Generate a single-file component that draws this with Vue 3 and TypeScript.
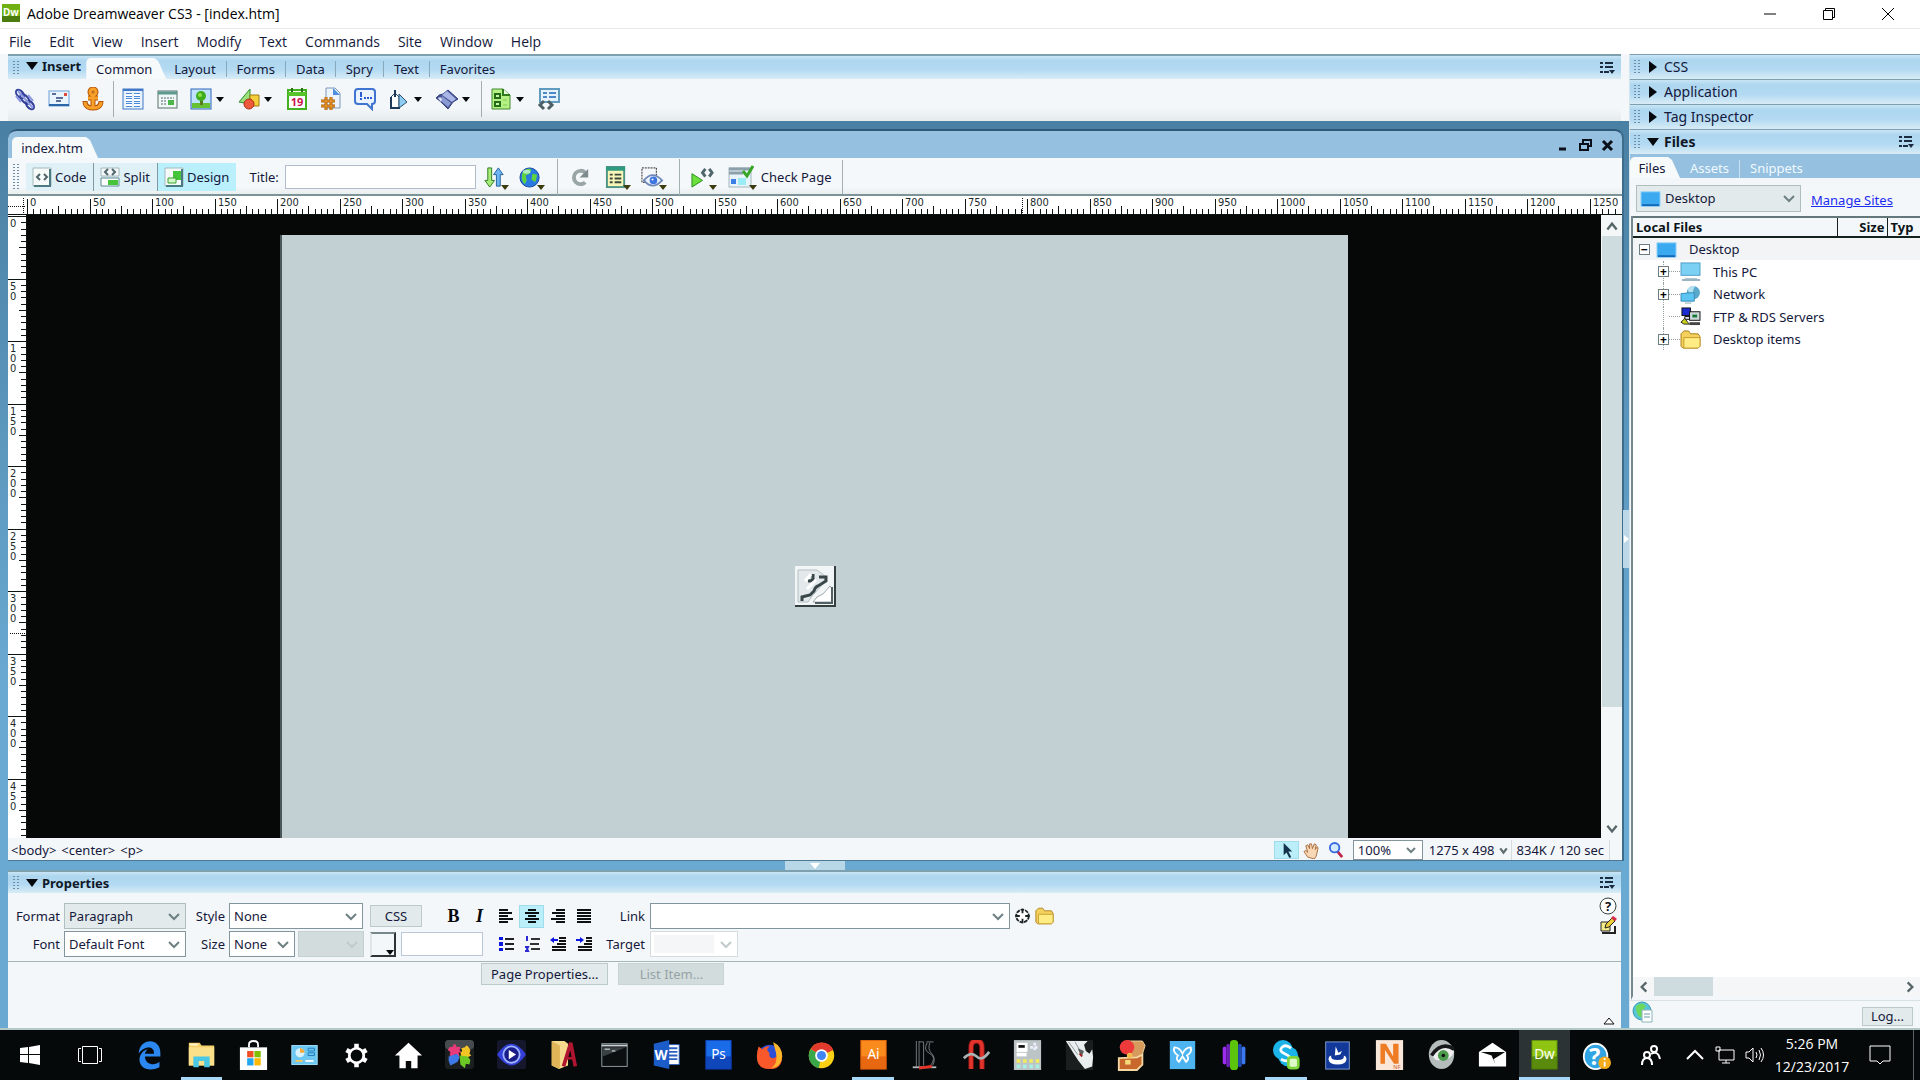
<script setup lang="ts">
import { computed, onBeforeUnmount, onMounted, ref } from 'vue'

interface Tool { name: string; icon: string; menu?: boolean; divider?: boolean }
interface TaskApp { name: string; icon: string; state?: 'open' | 'active' }

const menus = ['File', 'Edit', 'View', 'Insert', 'Modify', 'Text', 'Commands', 'Site', 'Window', 'Help']
const insertTabs = ['Layout', 'Forms', 'Data', 'Spry', 'Text', 'Favorites']
const panels = ['CSS', 'Application', 'Tag Inspector']

const insertTools: Tool[] = [
  { name: 'Hyperlink', icon: '<g fill="none" stroke="#33409a" stroke-width="2"><ellipse cx="7" cy="7" rx="3" ry="5" transform="rotate(-42 7 7)"/><ellipse cx="12" cy="12" rx="3" ry="6" transform="rotate(-42 12 12)"/><ellipse cx="17" cy="18" rx="3" ry="5" transform="rotate(-42 17 18)"/></g><path d="M5 4l15 17M8 15l-5-6M20 14l-5-6" stroke="#8f9be0" stroke-width="2"/>' },
  { name: 'Email Link', icon: '<rect x="2" y="4" width="20" height="15" fill="#eaf4fd" stroke="#6aa0d8"/><path d="M2 18h20" stroke="#2a66a8" stroke-width="2"/><rect x="17" y="6" width="3" height="3" fill="#e04a3a"/><path d="M5 7h4M9 11h7M9 14h5" stroke="#5b6f9a" stroke-width="2"/>' },
  { name: 'Named Anchor', divider: true, icon: '<g fill="none" stroke="#b65405" stroke-width="5"><circle cx="12" cy="5" r="3"/><path d="M12 8v13M7 11h10M4 14c0 6 5 7 8 7s8-1 8-7"/></g><g fill="none" stroke="#f7a02a" stroke-width="3"><circle cx="12" cy="5" r="3"/><path d="M12 8v13M7 11h10M4 15c0 5 5 6 8 6s8-1 8-6"/></g>' },
  { name: 'Table', icon: '<rect x="2" y="2" width="20" height="20" fill="#e8f2fd" stroke="#3f78c6" stroke-width="1"/><path d="M2 3h20" stroke="#3f78c6" stroke-width="2"/><path d="M5 8h6M13 8h6M5 13h6M13 13h6M5 18h6M13 18h6" stroke="#4a88d8" stroke-width="4"/><path d="M5 8h6M13 8h6M5 13h6M13 13h6M5 18h6M13 18h6" stroke="#fff" stroke-width="2"/>' },
  { name: 'Insert Div Tag', icon: '<rect x="3" y="4" width="19" height="17" fill="#f2f8f6" stroke="#55706c"/><path d="M3 6h19" stroke="#5c9a90" stroke-width="3"/><path d="M6 11h13M6 14h6M6 17h6" stroke="#556a72" stroke-dasharray="2 1"/><rect x="13" y="13" width="6" height="5" fill="#4cb64a"/>' },
  { name: 'Images', menu: true, icon: '<rect x="2" y="2" width="20" height="20" fill="#bfe3ff" stroke="#2f66b8" stroke-width="1"/><path d="M3 16h18v5H3z" fill="#67c233"/><path d="M11 12h3v6h-3z" fill="#5a7a22"/><circle cx="12" cy="9" r="5" fill="#3fae1b"/><circle cx="11" cy="8" r="2" fill="#8be04c"/>' },
  { name: 'Media', menu: true, icon: '<path d="M13 2v15L2 15z" fill="#9be07a" stroke="#2f8f2a"/><path d="M13 8h9v11h-9z" fill="#f3cf3a" stroke="#a07a10"/><circle cx="12" cy="17" r="5" fill="#ee5a3c" stroke="#b02a18"/>' },
  { name: 'Date', icon: '<rect x="3" y="3" width="18" height="19" fill="#fff" stroke="#43b01f" stroke-width="2"/><path d="M3 5h18v4H3z" fill="#55c52a"/><path d="M7 1v4M17 1v4" stroke="#2a6f18" stroke-width="2"/><text x="12" y="19" font-size="11" font-weight="700" text-anchor="middle" fill="#c8144e">19</text>' },
  { name: 'Server-Side Include', icon: '<path d="M7 1h9l5 5v15H7z" fill="#edf4fc" stroke="#7b97b8"/><path d="M14 1v7h7z" fill="#4f8ee0"/><path d="M7 10v13M12 10v13M2 14h14M2 19h14" stroke="#a85c0c" stroke-width="3"/><path d="M7 10v13M12 10v13M2 14h14M2 19h14" stroke="#f7a52c"/>' },
  { name: 'Comment', icon: '<path d="M5 2h14q3 0 3 3v9q0 3-3 3v5l-5-5H5q-3 0-3-3V5q0-3 3-3z" fill="#eaf3ff" stroke="#3f74d0" stroke-width="2"/><path d="M8 5v5M8 11v2" stroke="#2a5bd0" stroke-width="2"/><path d="M11 11h8" stroke="#2a5bd0" stroke-width="2" stroke-dasharray="2 1"/>' },
  { name: 'Head', menu: true, icon: '<path d="M4 10l4-4 4 4v11H4z" fill="#fff" stroke="#2b4f70"/><path d="M12 7l8 8-8 6z" fill="#8ecbf2" stroke="#2b4f70"/><path d="M8 3v7M4 10v11h9" fill="none" stroke="#1d3a5a" stroke-width="2"/>' },
  { name: 'Script', menu: true, divider: true, icon: '<path d="M1 11q3-4 7-4l5-4 10 9-5 3-5 7-6-6q-3-3-6-5z" fill="#4a5694" stroke="#343f80"/><path d="M7 8l5-4 9 8-4 3z" fill="#aab6e6"/><path d="M7 9l9 7-3 4-7-6q1-3 1-5z" fill="#8c9ad4"/><path d="M3 11q3-2 4 1l-1 3z" fill="#dde3fa"/>' },
  { name: 'Templates', menu: true, icon: '<path d="M3 2h11l7 6v14H3z" fill="#b4f084" stroke="#3f8a2c" stroke-width="1"/><path d="M14 2v6h7" fill="#e8ffe0" stroke="#2f7a1c" stroke-width="2"/><path d="M6 7h5v4H6zM6 15h5v4H6z" fill="#c8faa8" stroke="#236b16" stroke-width="2"/><path d="M14 13h4M14 18h4" stroke="#7cc850"/>' },
  { name: 'Tag Chooser', icon: '<rect x="3" y="2" width="19" height="13" fill="#e6f2fb" stroke="#5f9cc0" stroke-width="2"/><path d="M6 6h4M6 10h4M12 6h7M12 10h7" stroke="#4f88c8" stroke-width="2"/><path d="M7 14l-4 4 4 4M11 14l4 4-4 4" fill="none" stroke="#4b5f64" stroke-width="3"/>' },
]

const docTools: Tool[] = [
  { name: 'File Management', menu: true, icon: '<path d="M5 2h4v13h3l-5 7-5-7h3z" fill="#a8ec78" stroke="#2d7a24"/><path d="M14 21h4V9h3l-5-7-5 7h3z" fill="#6cb4f2" stroke="#22609a"/>' },
  { name: 'Preview in Browser', menu: true, divider: true, icon: '<circle cx="11" cy="12" r="10" fill="#2a7be0" stroke="#1648a0"/><path d="M4 6q5-5 9-2l-2 4-4 2 1 5-2 4Q1 14 4 6zM14 8l5 1-2 8-4-3z" fill="#5fd43c"/><ellipse cx="8" cy="6" rx="4" ry="2" fill="#d8f5ff" opacity=".7"/>' },
  { name: 'Refresh', icon: '<path d="M17 17a7 7 0 1 1 0-10" fill="none" stroke="#9aa5a8" stroke-width="4"/><path d="M20 3v9h-9z" fill="#7f8b8e"/>' },
  { name: 'View Options', menu: true, icon: '<rect x="2" y="1" width="18" height="21" fill="#f8f5b8" stroke="#4d9484" stroke-width="2"/><path d="M1 3h20" stroke="#2f9a80" stroke-width="4"/><path d="M5 9h3M5 13h3M5 17h3M10 9h7M10 13h7M10 17h7" stroke="#3a4a3c" stroke-width="2"/>' },
  { name: 'Visual Aids', menu: true, divider: true, icon: '<rect x="1" y="2" width="15" height="15" fill="none" stroke="#222" stroke-dasharray="2 1"/><path d="M3 15q9-11 19 0-10 11-19 0z" fill="#eef4fc" stroke="#6f88b8" stroke-width="2"/><circle cx="13" cy="15" r="4" fill="#3c74e0"/><circle cx="12" cy="14" r="1" fill="#fff"/>' },
  { name: 'Validate Markup', menu: true, icon: '<path d="M1 8l11 7-11 7z" fill="#6be03a" stroke="#2a8a20"/><path d="M15 3l-3 4 3 4M19 3l3 4-3 4" fill="none" stroke="#4e666c" stroke-width="3"/>' },
]

const textTools = [
  { name: 'Align Left', d: 'M2 3h9M2 6h13M2 9h9M2 12h14M2 15h9' },
  { name: 'Align Center', d: 'M5 3h8M2 6h14M5 9h8M2 12h14M5 15h8', on: true },
  { name: 'Align Right', d: 'M7 3h9M3 6h13M7 9h9M2 12h14M7 15h9' },
  { name: 'Justify', d: 'M2 3h14M2 6h14M2 9h14M2 12h14M2 15h14' },
]
const listTools = [
  { name: 'Unordered List', icon: '<path d="M2 2h4v3H2zM2 7h4v4H2zM2 13h4v3H2z" fill="#0b16e0"/><path d="M8 4h9M8 9h9M8 14h9" stroke="#222" stroke-width="2"/>' },
  { name: 'Ordered List', icon: '<path d="M3 2h1v4M2 12h3l-1 2 1 2H2" fill="none" stroke="#2a2ad0" stroke-width="2"/><path d="M8 4h9M7 9h9M8 14h9" stroke="#333" stroke-width="2"/>' },
  { name: 'Text Outdent', icon: '<path d="M10 3h7M10 6h7M8 9h9M3 12h14M3 15h14" stroke="#111" stroke-width="2"/><path d="M1 5l4-3v2h4v2H5v2z" fill="#0b16e0"/>' },
  { name: 'Text Indent', icon: '<path d="M11 3h6M11 6h6M9 9h8M3 12h14M3 15h14" stroke="#111" stroke-width="2"/><path d="M9 5L5 2v2H1v2h4v2z" fill="#0b16e0"/>' },
]

const tile = (a: string, b: string, t: string) =>
  `<rect x="2" y="0" width="28" height="32" fill="${a}"/><rect x="2" y="18" width="28" height="14" fill="${b}" opacity=".7"/><rect x="2" y="0" width="28" height="32" fill="none" stroke="${b}"/><text x="16" y="21" font-size="15" text-anchor="middle" fill="#fff">${t}</text>`

const apps: TaskApp[] = [
  { name: 'Edge', icon: '<path d="M28 18H11c0 9 11 11 16 6v6C14 36 4 30 5 20c1-5 4-9 9-10-2 2-3 4-3 5h10C21 4 8 8 4 15 5-3 28-3 28 14z" fill="#2b88f0"/>' },
  { name: 'File Explorer', state: 'open', icon: '<path d="M2 3h12l2 3h14v22H2z" fill="#f5cf6a"/><path d="M2 8h28v20H2z" fill="#fbe08a"/><path d="M3 4h9v2H3z" fill="#fff5cf"/><path d="M7 30V18h18v12h-6v-7h-6v7z" fill="#4bc8e4"/>' },
  { name: 'Store', icon: '<path d="M11 8V5q0-4 5-4t5 4v3" fill="none" stroke="#fff" stroke-width="2"/><path d="M1 8h30v25H1z" fill="#fff"/><path d="M9 12h7v7H9z" fill="#f04e24"/><path d="M17 12h7v7h-7z" fill="#7fc000"/><path d="M9 20h7v8H9z" fill="#22a6ee"/><path d="M17 20h7v8h-7z" fill="#fdb900"/>' },
  { name: 'Control Panel', icon: '<rect x="2" y="6" width="28" height="21" fill="#6cc8f2" stroke="#a8e4ff"/><circle cx="11" cy="14" r="5" fill="#d8f3ff"/><path d="M11 14V9a5 5 0 0 1 5 5z" fill="#f4a838"/><path d="M20 9h7v3h-7zM20 14h7v3h-7z" fill="none" stroke="#1f78b8"/><path d="M6 23h8" stroke="#f7c860" stroke-width="2"/><path d="M17 23h9" stroke="#fff" stroke-width="2"/>' },
  { name: 'Settings', icon: '<path d="M16 4v5M16 25v5M5 11l5 3M22 20l5 3M5 23l5-3M22 14l5-3" stroke="#fff" stroke-width="5"/><circle cx="16" cy="17" r="8" fill="#060909" stroke="#fff" stroke-width="3"/>' },
  { name: 'Home', icon: '<path d="M16 3l15 14h-5v14h-7v-8h-6v8H6V17H1z" fill="#fff"/>' },
  { name: 'Puzzle', icon: '<rect width="32" height="32" rx="4" fill="#1a1e1f"/><rect width="32" height="10" rx="4" fill="#464c4e"/><path d="M5 8l4-1q0-4 3-2l1 3 4-1-1 4 2 2-3 1 1 4-4-1-1-2-2 3-4-1 1-4-3-2z" fill="#e93b7b"/><path d="M18 9l4-1q2-4 4 0l2 3-1 4 2 2-4 2-7-1-1-4 2-2z" fill="#f2c424"/><path d="M4 18l9-3 3 4-2 5-4 2-4 2-2-5z" fill="#3f78e8"/><path d="M16 17l9 1 3 4-1 5-4-1-1 5-5-4z" fill="#6cc824"/>' },
  { name: 'Media Player', icon: '<rect width="32" height="32" rx="3" fill="#15182c"/><path d="M0 16q16-24 32 0-16 24-32 0z" fill="#3440d8"/><circle cx="16" cy="16" r="9" fill="#1a1c88" stroke="#9fb4ff" stroke-width="2"/><path d="M13 11l8 5-8 5z" fill="#fff"/>' },
  { name: 'Access Folder', icon: '<path d="M3 1h14l4 3v24l-10 4-8-4z" fill="#f6d98c"/><path d="M3 1l9 5v26l-9-4z" fill="#e2b458"/><path d="M16 29L24 3l5 26" fill="none" stroke="#b01530" stroke-width="4"/><path d="M18 20h9" stroke="#b01530" stroke-width="3"/>' },
  { name: 'Command Prompt', icon: '<rect x="2" y="4" width="28" height="25" fill="#0c0f10" stroke="#9aa8ac"/><path d="M2 6h28" stroke="#c8d0d4" stroke-width="2"/><path d="M3 8h26L3 18z" fill="#3a4244"/><path d="M5 10h6M13 12h4" stroke="#fff"/>' },
  { name: 'Word', icon: '<path d="M15 5h15v22H15z" fill="#fff" stroke="#2b5fc0"/><path d="M18 9h10M18 13h10M18 17h10M18 21h10" stroke="#2b5fc0" stroke-width="2"/><path d="M2 4l17-4v32L2 28z" fill="#1b5cc8"/><text x="10" y="22" font-size="15" font-weight="700" text-anchor="middle" fill="#fff">W</text>' },
  { name: 'Photoshop', icon: tile('#1a6be8', '#0b38a8', 'Ps') },
  { name: 'Firefox', icon: '<circle cx="16" cy="17" r="12" fill="#2c4fd8"/><path d="M4 7l4 3q4-4 8-3-5 4 0 7-1 6 4 6 6-1 3-8l-2-8q9 5 9 14 0 14-14 14T2 18Q2 12 4 7z" fill="#f8582a"/><path d="M20 2q10 5 10 16-1 12-12 13 8-6 5-18z" fill="#fdb52c"/>' },
  { name: 'Chrome', icon: '<circle cx="16" cy="17" r="14" fill="#fbd116"/><path d="M16 17L4 10A14 14 0 0 1 29 11z" fill="#e23a2c"/><path d="M16 17l-3 14A14 14 0 0 1 4 10z" fill="#3aa84a"/><circle cx="16" cy="17" r="7" fill="#fff"/><circle cx="16" cy="17" r="5" fill="#4285f4"/>' },
  { name: 'Illustrator', state: 'open', icon: tile('#f98a1c', '#e05a0c', 'Ai') },
  { name: 'DS', icon: '<path d="M7 1v28M10 1v28M10 2h5v26M18 2h8M19 3q-5 8 3 12t0 14M22 3q-3 7 2 12t1 13" fill="none" stroke="#7a8284"/><path d="M3 30h26" stroke="#b0b8ba" stroke-width="2"/><path d="M10 31l14-2" stroke="#e83428" stroke-width="3"/>' },
  { name: 'Artlantis', icon: '<path d="M10 32V8q0-7 6-7t6 7v24" fill="none" stroke="#8a1414" stroke-width="6"/><path d="M10 32V8q0-7 6-7t6 7v24" fill="none" stroke="#e0342c" stroke-width="4"/><path d="M2 20q8-8 14-2t14-5" fill="none" stroke="#aab4b6" stroke-width="3"/>' },
  { name: 'Calculator', icon: '<rect x="1" y="0" width="30" height="33" fill="#bcc4c6"/><path d="M4 3h12v10H4z" fill="#fff"/><path d="M6 7h7" stroke="#111" stroke-width="3"/><path d="M4 16h11" stroke="#fff" stroke-width="4"/><path d="M4 23h26" stroke="#f4ec5c" stroke-width="4" stroke-dasharray="4 3"/><path d="M4 29h26" stroke="#a6f0e4" stroke-width="4" stroke-dasharray="4 3"/><path d="M19 8h10M24 3v10" stroke="#eef" stroke-width="3" stroke-dasharray="3 2"/>' },
  { name: 'Rhinoceros', icon: '<rect x="1" width="30" height="33" fill="#1b1e1f"/><path d="M1 1h24l-4 4 2 7 4 3 3-5 1 9-1 10-8 3-7-9-6-9z" fill="#e9eeee"/><path d="M4 2l10 14M11 2l7 12" stroke="#8b9294"/><path d="M14 9l7 3-3 7z" fill="#5a6264"/><path d="M16 15l3 3" stroke="#a82020" stroke-width="2"/>' },
  { name: 'Treasure Chest', icon: '<path d="M10 1h18l3 5-4 13-15 2z" fill="#d59a5c" stroke="#f4d8a4"/><circle cx="11" cy="8" r="8" fill="#ee3a3a"/><path d="M2 20l20-1 6-3v11l-6 6H2z" fill="#c8682c" stroke="#f4d8a4" stroke-width="2"/><circle cx="14" cy="17" r="3" fill="#f4bc4c"/><path d="M9 22h6v5H9z" fill="#f6dc7c"/>' },
  { name: 'Butterfly', icon: '<rect x="2" y="1" width="28" height="31" fill="#4db4f0"/><path d="M7 8q6 0 9 7 3-7 9-7 2 5-4 9 3 4-1 7l-4-6-4 6q-4-3-1-7-6-4-4-9z" fill="none" stroke="#fff" stroke-width="2"/>' },
  { name: 'Audio', icon: '<rect x="3" y="7" width="4" height="20" rx="2" fill="#9c2cf0"/><rect x="7" y="4" width="4" height="26" rx="2" fill="#6c20b8"/><rect x="11" y="0" width="9" height="33" rx="4" fill="#5cc40c"/><rect x="20" y="4" width="4" height="26" rx="2" fill="#204cb0"/><rect x="24" y="7" width="4" height="20" rx="2" fill="#3c78f0"/>' },
  { name: 'Skype', state: 'open', icon: '<circle cx="12" cy="11" r="11" fill="#1cb4e8"/><circle cx="18" cy="18" r="11" fill="#1cb4e8"/><path d="M21 9q-6-5-10-1t3 7 6 6q-4 4-10 0" fill="none" stroke="#fff" stroke-width="3"/><rect x="18" y="19" width="11" height="12" rx="3" fill="#dff8c8" stroke="#7ed63c" stroke-width="3"/>' },
  { name: 'Installer', icon: '<rect x="3" y="2" width="26" height="30" fill="#12389a" stroke="#86a4d8"/><path d="M14 7l3 7 4-2-2 4-6 1z" fill="#fff"/><path d="M9 17q-3 1-3 4 1 6 10 6t10-6q0-3-3-4 1 5-7 5t-7-5z" fill="#fff"/>' },
  { name: 'Nuance', icon: '<rect x="1" width="30" height="33" fill="#fbe6da"/><path d="M6 26V4h6l8 14V4h6v22h-5L11 11v15z" fill="#ee7c24"/><text x="24" y="32" font-size="6" text-anchor="middle" fill="#c85c1c">NF</text>' },
  { name: 'Eye', icon: '<ellipse cx="16" cy="16" rx="14" ry="16" fill="#b4bcbc"/><path d="M6 18Q16 2 30 12q-3 12-20 10z" fill="#efefef"/><path d="M5 17Q16 1 30 10" fill="none" stroke="#16181a" stroke-width="4"/><circle cx="18" cy="17" r="6" fill="#4c9a4c"/><circle cx="18" cy="17" r="2" fill="#111"/>' },
  { name: 'Mail', icon: '<path d="M1 13L16 3l15 10v16H1z" fill="#fff"/><path d="M3 13h27l-13 8-2-4z" fill="#090b0b"/><path d="M15 17l4 9-2-6" fill="#090b0b"/>' },
  { name: 'Dreamweaver', state: 'active', icon: tile('#8fc412', '#44740a', 'Dw') },
  { name: 'Help', icon: '<ellipse cx="15" cy="18" rx="14" ry="15" fill="#fff"/><ellipse cx="15" cy="18" rx="12" ry="13" fill="#31a4e4"/><text x="14" y="28" font-size="26" font-weight="700" text-anchor="middle" fill="#fff">?</text><circle cx="25" cy="25" r="7" fill="#f4ac1c"/><path d="M25 24v5M25 20v2" stroke="#fff" stroke-width="2"/>' },
]

const screen = '<rect x="1" y="3" width="20" height="15" fill="#3aa9f0" stroke="#8ad0fa"/><path d="M2 17h18" stroke="#1468b8" stroke-width="2"/>'
const tree = [
  { name: 'This PC', expand: true, icon: '<rect x="1" y="1" width="20" height="13" fill="#7cd0f4" stroke="#4a9cc4"/><path d="M5 18h13M2 19h19" stroke="#9ab4c0" stroke-width="2"/>' },
  { name: 'Network', expand: true, icon: '<circle cx="14" cy="8" r="7" fill="#5aa8cc"/><path d="M8 4q4-4 8-3-3 4-2 8-5 1-6-5z" fill="#b4e0f0"/><path d="M1 9l14-1v9H1z" fill="#5cc4f0" stroke="#3a8cb8"/><path d="M5 19h7" stroke="#8aa" />' },
  { name: 'FTP & RDS Servers', expand: false, icon: '<rect x="2" y="1" width="9" height="8" fill="#1a2cd0" stroke="#111"/><path d="M5 10h6v3H5z" fill="#dde" stroke="#111"/><rect x="10" y="5" width="11" height="9" fill="#cdd8d8" stroke="#111"/><path d="M13 8h5v3h-5z" fill="#187838"/><path d="M10 16h11v3H10z" fill="#444"/><path d="M1 16l4-4 3 4 2 2H4z" fill="#c8d018" stroke="#222"/>' },
  { name: 'Desktop items', expand: true, icon: '<path d="M1 4l3-3h5l2 3h8l2 3v10l-2 2H3l-2-2z" fill="#f4d05c" stroke="#a87c18"/><path d="M4 8h17v9l-2 2H4z" fill="#ffec84" stroke="#c49a28"/>' },
]
const folder = tree[3].icon

// 50 document pixels take 62.5 screen pixels on both rulers.
const step = 62.5
const origin = { x: 19, y: 1 }
const stage = ref<HTMLElement | null>(null)
const size = ref({ w: 0, h: 0 })
let watcher: ResizeObserver | undefined

onMounted(() => {
  const el = stage.value
  if (!el) return
  const measure = () => { size.value = { w: el.clientWidth, h: el.clientHeight } }
  measure()
  watcher = new ResizeObserver(measure)
  watcher.observe(el)
})
onBeforeUnmount(() => watcher?.disconnect())

const tickPath = (length: number, start: number, vertical: boolean): string => {
  let d = ''
  for (let i = 0; (i * step) / 10 < length; i++) {
    const p = Math.round(start + (i * step) / 10) + 0.5
    const long = i % 10 === 0
    const mid = i % 5 === 0
    d += vertical
      ? `M${long ? 0 : mid ? 11 : 13} ${p}H19`
      : `M${p} ${long ? 3 : mid ? 10 : 13}V18`
  }
  return d
}
const marksWithin = (length: number, room: number) =>
  Array.from({ length: Math.max(0, Math.floor((length - room) / step) + 1) }, (_, i) => ({ value: i * 50, at: Math.round(i * step) }))

const hTicks = computed(() => tickPath(size.value.w + 18, origin.x, false))
const vTicks = computed(() => tickPath(size.value.h, origin.y, true))
const hMarks = computed(() => marksWithin(size.value.w + 21, 30))
const vMarks = computed(() => marksWithin(size.value.h, 36))

const title = ref('')
const link = ref('')
const color = ref('')
</script>

<template>
  <div class="app">
    <header class="titlebar">
      <svg class="logo" viewBox="0 0 18 18"><rect width="18" height="18" fill="#6fb012" /><path d="M0 12h18v6H0z" fill="#4a7c10" /><text x="9" y="12" font-size="10" font-weight="700" text-anchor="middle" fill="#fff">Dw</text></svg>
      <h1>Adobe Dreamweaver CS3 - [index.htm]</h1>
      <div class="winbtns">
        <button aria-label="Minimize"><svg viewBox="0 0 12 12"><path d="M0 6h12" stroke="#000" /></svg></button>
        <button aria-label="Restore"><svg viewBox="0 0 12 12"><path d="M.5 2.500h9v9h-9zM2.500 2.500v-2h9v9h-2" fill="none" stroke="#000" /></svg></button>
        <button aria-label="Close"><svg viewBox="0 0 12 12"><path d="M0 0l12 12M12 0L0 12" stroke="#000" /></svg></button>
      </div>
    </header>
    <nav class="menubar"><button v-for="m in menus" :key="m">{{ m }}</button></nav>

    <div class="workspace">
      <div class="left">
        <section class="insert">
          <div class="bar">
            <i class="grip"></i>
            <button class="fold"><i class="tri down"></i><b>Insert</b></button>
            <div class="itabs">
              <button class="tab on"><span>Common</span></button>
              <button v-for="t in insertTabs" :key="t" class="itab">{{ t }}</button>
            </div>
            <button class="opts" aria-label="Panel options"><svg viewBox="0 0 16 14"><path d="M1 2h3M6 2h8M1 6h3M6 6h8M1 11h3M5 11h5" stroke="#1c2c40" stroke-width="2" /><path d="M10 9h6l-3 4z" fill="#1c2c40" /></svg></button>
          </div>
          <div class="tools">
            <span v-for="t in insertTools" :key="t.name" class="tool" :class="{ divider: t.divider }">
              <button :aria-label="t.name"><svg viewBox="0 0 24 24" v-html="t.icon"></svg></button>
              <button v-if="t.menu" class="drop" :aria-label="t.name + ' menu'"><i class="tri down"></i></button>
            </span>
          </div>
        </section>

        <div class="dock">
          <section class="doc">
            <div class="doctabs">
              <button class="tab on"><span>index.htm</span></button>
              <div class="docbtns">
                <button aria-label="Minimize document"><svg viewBox="0 0 14 14"><path d="M3 11h7" stroke="#0a0f18" stroke-width="3" /></svg></button>
                <button aria-label="Restore document"><svg viewBox="0 0 14 14"><path d="M2 6h8v6H2zM5 5V2h8v6h-3" fill="none" stroke="#0a0f18" stroke-width="2" /></svg></button>
                <button aria-label="Close document"><svg viewBox="0 0 14 14"><path d="M3 3l9 9M12 3l-9 9" stroke="#0a0f18" stroke-width="3" /></svg></button>
              </div>
            </div>
            <div class="doctools">
              <i class="grip tall"></i>
              <div class="views">
                <button><svg viewBox="0 0 20 20"><path d="M1 1h18v18H1z" fill="#f6faf8" stroke="#a4b8bc" /><path d="M18 2v17H2" fill="none" stroke="#4b7a80" stroke-width="2" /><path d="M8 7l-3 3 3 3M12 7l3 3-3 3" fill="none" stroke="#51666c" stroke-width="2" /></svg>Code</button>
                <button><svg viewBox="0 0 20 20"><path d="M1 1h18v8H1z" fill="#f4f8f8" stroke="#a4b8bc" /><path d="M8 2L5 5l3 3M12 2l3 3-3 3" fill="none" stroke="#51666c" stroke-width="2" /><path d="M1 11h18v8H1z" fill="#fff" stroke="#5a8a90" /><path d="M8 13h10v5H8z" fill="#46c43a" /></svg>Split</button>
                <button class="sel"><svg viewBox="0 0 20 20"><path d="M1 1h18v18H1z" fill="#f6fafa" stroke="#a4b8bc" /><path d="M18 2v17H2" fill="none" stroke="#4b7a80" stroke-width="2" /><path d="M9 4h8v9H9z" fill="#46c43a" /><path d="M4 11h8v5H4z" fill="#d4f8c8" stroke="#3aa030" /></svg>Design</button>
              </div>
              <label class="titlefield">Title: <input v-model="title" type="text" /></label>
              <span v-for="t in docTools" :key="t.name" class="dtool" :class="{ divider: t.divider }">
                <button :aria-label="t.name"><svg viewBox="0 0 24 24" v-html="t.icon"></svg><i v-if="t.menu" class="tri down corner"></i></button>
              </span>
              <button class="check"><svg viewBox="0 0 26 24"><rect x="1" y="3" width="22" height="19" fill="#e8f4fa" stroke="#a4b4bc" /><path d="M1 4h22M1 8h14" stroke="#8ba0aa" stroke-width="3" /><path d="M3 14h5v5H3z" fill="#3a7ee8" /><path d="M10 13h8v7h-8z" fill="#9cecf6" /><path d="M15 6l4 5 6-10" fill="none" stroke="#38a428" stroke-width="3" /></svg><i class="tri down corner"></i>Check Page</button>
            </div>

            <div class="hruler">
              <svg width="100%" height="19">
                <path :d="hTicks" stroke="#0c1414" /><path :d="`M0 18.500H${size.w + 40}`" stroke="#0c1414" />
                <path d="M0 10.500H18M15.500 2V18M1014.500 2V18" stroke="#111" stroke-dasharray="1 1" />
                <text v-for="m in hMarks" :key="m.value" :x="m.at + 22" y="10">{{ m.value }}</text>
              </svg>
            </div>
            <div class="view">
              <div class="vruler">
                <svg width="19" height="100%">
                  <path :d="vTicks" stroke="#0c1414" /><path :d="`M18.500 0V${size.h}`" stroke="#0c1414" />
                  <path d="M2 418.500H18" stroke="#111" stroke-dasharray="1 1" />
                  <text v-for="m in vMarks" :key="m.value" :y="m.at + 2"><tspan v-for="(c, i) in String(m.value)" :key="i" x="2" dy="10">{{ c }}</tspan></text>
                </svg>
              </div>
              <div ref="stage" class="stage">
                <div class="page">
                  <svg class="broken" viewBox="0 0 41 41"><rect width="41" height="41" fill="#33403f" /><rect width="39" height="39" fill="#f2f5f6" /><path d="M3 36V4h19l8 6v6L17 30l-4 6z" fill="#e3e9eb" stroke="#b4bfc2" /><path d="M13 15q4 0 5-2V8M24 11h7v4l-8 5q-3 1-4 5l-4 4-8 2v4" fill="none" stroke="#39474a" stroke-width="3" /><path d="M10 15l6-7M21 14l-9 9" stroke="#fff" stroke-width="3" /><path d="M18 36l4-5 6-3 7-8 2 3v13z" fill="#fff" stroke="#9fabae" /><path d="M20 37h17V21" fill="none" stroke="#536164" stroke-width="2" /></svg>
                </div>
              </div>
              <div class="vscroll">
                <button aria-label="Scroll up"><svg viewBox="0 0 12 12"><path d="M2 9l4-5 4 5" /></svg></button>
                <div class="track"><div class="thumb"></div></div>
                <button aria-label="Scroll down"><svg viewBox="0 0 12 12"><path d="M2 4l4 5 4-5" /></svg></button>
              </div>
            </div>
            <footer class="status">
              <button>&lt;body&gt;</button><button>&lt;center&gt;</button><button>&lt;p&gt;</button>
              <div class="stright">
                <button class="mode on" aria-label="Select"><svg viewBox="0 0 18 18"><path d="M6 1v13l3-3 3 6 2-1-3-6h4z" fill="#14324c" /></svg></button>
                <button class="mode" aria-label="Hand"><svg viewBox="0 0 18 18"><path d="M5 16l-4-6 2-1 2 2L3 4l2-1 2 4V2h2l1 5 2-5 2 1-1 5 2-3 1 1-2 9-2 3z" fill="#f8d8b4" stroke="#a86a3c" /></svg></button>
                <button class="mode" aria-label="Zoom"><svg viewBox="0 0 18 18"><path d="M10 10l5 6" stroke="#c0284a" stroke-width="3" /><circle cx="7" cy="6" r="5" fill="#d4eaff" stroke="#3a6ae0" stroke-width="2" /></svg></button>
                <span class="combo zoom"><select aria-label="Magnification"><option>100%</option></select><svg viewBox="0 0 12 12"><path d="M2 4l4 4 4-4" /></svg></span>
                <button class="wsize">1275 x 498<svg viewBox="0 0 12 12"><path d="M3 4l3 4 3-4" /></svg></button>
                <span class="weight">834K / 120 sec</span>
              </div>
            </footer>
          </section>
        </div>

        <div class="split"><button aria-label="Collapse properties"><i class="tri down"></i></button></div>

        <section class="props">
          <div class="bar">
            <i class="grip"></i>
            <button class="fold"><i class="tri down"></i><b>Properties</b></button>
            <button class="opts" aria-label="Properties options"><svg viewBox="0 0 16 14"><path d="M1 2h3M6 2h8M1 6h3M6 6h8M1 11h3M5 11h5" stroke="#1c2c40" stroke-width="2" /><path d="M10 9h6l-3 4z" fill="#1c2c40" /></svg></button>
          </div>
          <div class="pbody">
            <div class="pgrid">
              <label for="format">Format</label>
              <span class="combo grey c1"><select id="format"><option>Paragraph</option></select><svg viewBox="0 0 12 12"><path d="M1 4l5 5 5-5" /></svg></span>
              <label for="style">Style</label>
              <span class="pair"><span class="combo c2"><select id="style"><option>None</option></select><svg viewBox="0 0 12 12"><path d="M1 4l5 5 5-5" /></svg></span></span>
              <span class="extra">
                <button class="push css">CSS</button>
                <span class="fmt">
                  <button class="serif" aria-label="Bold"><b>B</b></button><button class="serif" aria-label="Italic"><b><em>I</em></b></button>
                  <button v-for="t in textTools" :key="t.name" :class="{ on: t.on }" :aria-label="t.name"><svg viewBox="0 0 18 18"><path :d="t.d" stroke="#0c1214" stroke-width="2" /></svg></button>
                </span>
              </span>
              <label for="link">Link</label>
              <span class="pair"><span class="combo linkbox"><input id="link" v-model="link" type="text" /><svg viewBox="0 0 12 12"><path d="M1 4l5 5 5-5" /></svg></span>
                <button aria-label="Point to file"><svg class="mini" viewBox="0 0 20 20"><circle cx="10" cy="10" r="7" fill="#fff" stroke="#1b2424" stroke-width="2" stroke-dasharray="4 1" /><path d="M10 2v5M10 13v5M2 10h5M13 10h5" stroke="#1b2424" stroke-width="2" /></svg></button>
                <button aria-label="Browse for file"><svg class="mini" viewBox="0 0 22 20" v-html="folder"></svg></button></span>

              <label for="font">Font</label>
              <span class="combo c1"><select id="font"><option>Default Font</option></select><svg viewBox="0 0 12 12"><path d="M1 4l5 5 5-5" /></svg></span>
              <label for="size">Size</label>
              <span class="pair">
                <span class="combo half"><select id="size"><option>None</option></select><svg viewBox="0 0 12 12"><path d="M1 4l5 5 5-5" /></svg></span>
                <span class="combo half off"><select aria-label="Size units" disabled></select><svg viewBox="0 0 12 12"><path d="M1 4l5 5 5-5" /></svg></span>
              </span>
              <span class="extra">
                <button class="swatch" aria-label="Text color"><i class="tri down"></i></button><input v-model="color" class="hex" type="text" aria-label="Color value" />
                <span class="fmt">
                  <button v-for="t in listTools" :key="t.name" :aria-label="t.name"><svg viewBox="0 0 18 18" v-html="t.icon"></svg></button>
                </span>
              </span>
              <label for="target">Target</label>
              <span class="combo target"><select id="target" disabled></select><svg viewBox="0 0 12 12"><path d="M1 4l5 5 5-5" /></svg></span>
            </div>
            <div class="side">
              <button aria-label="Help"><svg viewBox="0 0 18 18"><circle cx="9" cy="9" r="8" fill="#fff" stroke="#33413f" /><text x="9" y="14" font-size="13" font-weight="700" text-anchor="middle" fill="#111">?</text></svg></button>
              <button aria-label="Quick Tag Editor"><svg viewBox="0 0 18 18"><path d="M2 6h9v9H2z" fill="#f6ee8c" stroke="#222" /><path d="M3 17h13V10" fill="none" stroke="#222" stroke-width="2" /><path d="M6 12l1-4 6-6 3 3-6 6z" fill="#e8cc3c" stroke="#222" /><path d="M13 1l4 3" stroke="#d8304a" stroke-width="3" /></svg></button>
            </div>
          </div>
          <div class="pfoot">
            <button class="push">Page Properties...</button>
            <button class="push dis" disabled>List Item...</button>
            <button class="expander" aria-label="Collapse"><svg viewBox="0 0 12 10"><path d="M1 8h10L6 2z" fill="#fff" stroke="#111" /></svg></button>
          </div>
        </section>
        <button class="collapse" aria-label="Collapse panels"><svg viewBox="0 0 6 10"><path d="M1 1l5 4-5 4z" fill="#fff" /></svg></button>
      </div>

      <aside class="right">
        <button v-for="p in panels" :key="p" class="bar panel"><i class="grip"></i><i class="tri side-tri"></i>{{ p }}</button>
        <div class="bar panel">
          <i class="grip"></i><i class="tri down"></i><b>Files</b>
          <button class="opts" aria-label="Files options"><svg viewBox="0 0 16 14"><path d="M1 2h3M6 2h8M1 6h3M6 6h8M1 11h3M5 11h5" stroke="#1c2c40" stroke-width="2" /><path d="M10 9h6l-3 4z" fill="#1c2c40" /></svg></button>
        </div>
        <div class="ftabs">
          <button class="tab on"><span>Files</span></button><button class="ftab">Assets</button><button class="ftab">Snippets</button>
        </div>
        <div class="fbar">
          <span class="combo grey site"><svg class="pic" viewBox="0 0 22 20" v-html="screen"></svg><select aria-label="Site"><option>Desktop</option></select><svg viewBox="0 0 12 12"><path d="M1 4l5 5 5-5" /></svg></span>
          <a href="#sites">Manage Sites</a>
        </div>
        <div class="files">
          <table>
            <thead><tr><th class="nm">Local Files</th><th class="sz">Size</th><th class="ty">Typ</th></tr></thead>
            <tbody>
              <tr class="root"><td colspan="3"><div class="node"><button class="box" aria-label="Collapse Desktop">−</button><svg viewBox="0 0 22 20" v-html="screen"></svg><span>Desktop</span></div></td></tr>
              <tr v-for="n in tree" :key="n.name"><td colspan="3"><div class="node child"><button v-if="n.expand" class="box" :aria-label="'Expand ' + n.name">+</button><i v-else class="nobox"></i><i class="dots"></i><svg viewBox="0 0 22 20" v-html="n.icon"></svg><span>{{ n.name }}</span></div></td></tr>
            </tbody>
          </table>
          <div class="hscroll">
            <button aria-label="Scroll left"><svg viewBox="0 0 12 12"><path d="M8 2L4 6l4 4" /></svg></button>
            <div class="htrack"><div class="hthumb"></div></div>
            <button aria-label="Scroll right"><svg viewBox="0 0 12 12"><path d="M4 2l4 4-4 4" /></svg></button>
          </div>
        </div>
        <div class="flog">
          <svg viewBox="0 0 22 22"><circle cx="10" cy="10" r="9" fill="#58c4d8" stroke="#3a9ab0" /><path d="M4 5q6-5 10 0l-4 6 2 6q-8 0-8-12z" fill="#6cd85c" /><path d="M10 9h10v12H10z" fill="#fff" stroke="#8cb4bc" /><path d="M12 13h6M12 16h6" stroke="#69a" /></svg>
          <button class="push">Log...</button>
        </div>
      </aside>
    </div>

    <footer class="taskbar">
      <button class="start" aria-label="Start"><svg viewBox="0 0 20 20"><path d="M0 3l8-1v7H0zM9 2l11-2v9H9zM0 10h8v8l-8-1zM9 10h11v10L9 18z" fill="#fff" /></svg></button>
      <button class="start" aria-label="Task View"><svg class="wide" viewBox="0 0 24 20"><path d="M4.500 1.500h15v17h-15zM3 3.500H.5v13H3M21 3.500h2.500v13H21" fill="none" stroke="#fff" /></svg></button>
      <div class="apps">
        <button v-for="a in apps" :key="a.name" :class="a.state" :aria-label="a.name"><svg viewBox="0 0 32 34" v-html="a.icon"></svg></button>
      </div>
      <div class="tray">
        <button class="people" aria-label="People"><svg viewBox="0 0 20 20"><g fill="none" stroke="#fff" stroke-width="2"><circle cx="6" cy="10" r="3" /><path d="M1 20q0-7 5-7t5 7" /><circle cx="13" cy="4" r="3" /><path d="M10 9q7-4 9 5" /></g></svg></button>
        <button aria-label="Show hidden icons"><svg viewBox="0 0 20 20"><path d="M2 14l8-8 8 8" fill="none" stroke="#fff" stroke-width="2" /></svg></button>
        <button aria-label="Network"><svg viewBox="0 0 20 20"><path d="M4 5h15v10H4zM11 15v3M7 18h8M1 2h4v4H1z" fill="none" stroke="#fff" /></svg></button>
        <button aria-label="Volume"><svg viewBox="0 0 20 20"><path d="M1 7h3l4-4v14l-4-4H1zM11 7q2 3 0 6M14 5q3 5 0 10M16 3q5 7 0 14" fill="none" stroke="#fff" /></svg></button>
        <div class="clock"><time>5:26 PM</time><time>12/23/2017</time></div>
        <button class="note" aria-label="Notifications"><svg viewBox="0 0 22 22"><path d="M1 2h20v15h-7l-3 3-3-3H1z" fill="none" stroke="#fff" /></svg></button>
      </div>
    </footer>
  </div>
</template>

<style>
html, body { margin: 0; background: #f4f7f9; }
</style>

<style scoped>
* { box-sizing: border-box; }
.app { min-height: 100vh; display: flex; flex-direction: column; font: 13px/16px "Noto Sans", "Open Sans", sans-serif; color: #14183c; background: #f4f7f9; overflow: hidden; }
button { font: inherit; color: inherit; background: none; border: 0; padding: 0; margin: 0; white-space: nowrap; }
input, select { font: inherit; color: inherit; margin: 0; border-radius: 0; min-width: 0; }
svg { display: block; flex: none; }
.tri { width: 0; height: 0; flex: none; border: 6px solid transparent; }
.tri.down { border-top: 8px solid #05080c; border-bottom: 0; }
.side-tri { border-left: 8px solid #05080c; border-right: 0; }

.titlebar { height: 29px; display: flex; align-items: center; background: #fff; border-bottom: 1px solid #e8e8e8; padding: 0 3px 0 2px; }
.logo { width: 18px; height: 18px; margin-bottom: 3px; }
h1 { font: 400 14px/20px "Open Sans", "Noto Sans", sans-serif; color: #000; margin: 0 0 0 7px; }
.winbtns { margin-left: auto; display: flex; }
.winbtns button { width: 59px; height: 28px; display: grid; place-items: center; }
.winbtns svg { width: 12px; height: 12px; }
.menubar { height: 25px; display: flex; align-items: center; gap: 18px; padding-left: 9px; background: #fff; font: 14px/20px "Open Sans", "Noto Sans", sans-serif; }

.workspace { flex: 1; display: flex; background: linear-gradient(#4a80a3 8%, #6aa9d2 65%, #6aa9d2); border-bottom: 2px solid #b4c8c8; }
.left { flex: 1; min-width: 0; display: flex; flex-direction: column; position: relative; }
.bar { display: flex; align-items: center; height: 25px; background: linear-gradient(#c9e5f6, #add6ef 20%, #b3daf2 60%, #d8ecf6); border-top: 2px solid #7d9fae; }
.grip { width: 6px; height: 14px; flex: none; background: repeating-linear-gradient(#6d8ca8 0 1px, transparent 1px 3px); -webkit-mask: linear-gradient(90deg, #000 2px, transparent 2px 4px, #000 4px); mask: linear-gradient(90deg, #000 2px, transparent 2px 4px, #000 4px); }
.opts { margin-left: auto; margin-right: 6px; }
.opts svg { width: 16px; height: 14px; }
.fold { display: flex; align-items: center; gap: 4px; margin-left: 7px; line-height: 20px; }
.fold b, .panel b { font-weight: 700; color: #101828; }

.insert { height: 67px; background: linear-gradient(#f4f7f9 80%, #e4ebed); border-left: 8px solid #f4f7f9; border-right: 8px solid #f4f7f9; flex: none; }
.insert .bar { padding-left: 5px; }
.insert .fold { margin-bottom: 4px; }
.itabs { display: flex; align-self: stretch; margin-left: 5px; align-items: flex-end; }
.tab { position: relative; height: 21px; isolation: isolate; }
.tab::before { content: ""; position: absolute; inset: 0; z-index: -1; background: #f7fafb; border-radius: 5px 6px 0 0; clip-path: polygon(0 0, calc(100% - 12px) 0, calc(100% - 8px) 3px, 100% 100%, 0 100%); }
.insert .tab { width: 80px; padding-right: 4px; }
.itab { height: 16px; margin-bottom: 2px; padding: 0 10px; border-left: 1px solid #88a8bc; line-height: 16px; }
.tab + .itab { border-left: 0; padding-left: 8px; }
.tools { display: flex; align-items: center; height: 40px; padding-left: 5px; }
.tool { display: flex; align-items: center; padding-right: 10px; }
.tool svg { width: 24px; height: 24px; }
.tool.divider { padding-right: 8px; margin-right: 7px; border-right: 1px solid #a4aeb2; height: 36px; }
.drop { width: 14px; display: grid; place-items: center; }
.drop .tri, .tri.corner, .swatch .tri { border-width: 4px; border-top-width: 5px; border-bottom-width: 0; }

.dock { flex: 1; display: flex; padding: 8px 5px 0 8px; }
.doc { flex: 1; min-width: 0; display: flex; flex-direction: column; border-radius: 9px 9px 0 0; background: #96c0df; border-top: 2px solid #2f5878; border-right: 2px solid #3d6c8c; overflow: hidden; }
.doctabs { height: 27px; display: flex; align-items: flex-end; padding-left: 4px; }
.doctabs .tab { width: 86px; padding-right: 6px; }
.docbtns { margin-left: auto; align-self: center; display: flex; gap: 8px; padding-right: 8px; }
.docbtns svg { width: 14px; height: 14px; }
.doctools { height: 38px; display: flex; align-items: center; background: linear-gradient(#f5f8fa 80%, #e8eeee); border-bottom: 2px solid #7c9498; padding: 2px 0 0 5px; flex: none; }
.grip.tall { height: 26px; }
.views { display: flex; margin-left: 7px; }
.views button { height: 28px; display: flex; align-items: center; gap: 3px; padding: 0 7px 0 6px; background: #dff1f6; border-right: 1px solid #7f9aa4; }
.views button.sel { background: #baeffc; border: 0; }
.views svg { width: 20px; height: 20px; }
.titlefield { display: flex; align-items: center; gap: 6px; margin: 0 7px 0 13px; }
.titlefield input { width: 191px; height: 24px; border: 1px solid #b0bccc; background: #fff; }
.dtool { width: 36px; display: flex; align-items: center; }
.dtool button, .check { position: relative; }
.dtool svg { width: 23px; height: 23px; }
.dtool.divider { width: 39px; margin-right: 11px; height: 36px; border-right: 1px solid #a4b0b4; }
.tri.corner { position: absolute; left: 18px; bottom: -1px; border-top-color: #3c3c10; }
.check { display: flex; align-items: center; gap: 7px; height: 34px; padding: 0 10px 0 1px; border-right: 1px solid #a4b0b4; }
.check svg { width: 26px; height: 24px; }
.check .tri.corner { left: 22px; bottom: 4px; }

.hruler { height: 19px; background: #fff; flex: none; overflow: hidden; }
.hruler text, .vruler text { font: 11px "DejaVu Sans Condensed", "Noto Sans", sans-serif; fill: #1c2c2c; }
.view { flex: 1; min-height: 0; display: flex; }
.vruler { width: 19px; background: #fff; flex: none; position: relative; overflow: hidden; }
.vruler svg { position: absolute; inset: 0; }
.stage { flex: 1; min-width: 0; background: #050807; padding-top: 20px; display: flex; justify-content: center; }
.page { width: 1068px; background: #c2d0d4; border-left: 2px solid #4c5759; display: flex; justify-content: center; align-items: center; padding-top: 100px; }
.broken { width: 41px; height: 41px; }
.vscroll { width: 21px; background: #f4f7f8; display: flex; flex-direction: column; }
.vscroll button, .hscroll button { width: 21px; height: 21px; display: grid; place-items: center; }
.vscroll svg, .hscroll svg { width: 14px; height: 14px; fill: none; stroke: #566668; stroke-width: 2px; }
.track { flex: 1; }
.thumb { height: 81%; margin-left: 1px; background: #cfdcdf; }
.status { height: 23px; display: flex; align-items: center; gap: 5px; padding: 2px 0 0 3px; background: #f4f7f9; border-bottom: 1px solid #4e7894; flex: none; }
.stright { margin-left: auto; display: flex; align-items: center; height: 20px; padding-right: 12px; }
.mode { width: 25px; height: 18px; display: grid; place-items: center; }
.mode svg { width: 17px; height: 17px; }
.on.mode, .fmt .on { background: #baeffa; border: 1px solid #a0dcec; }

.combo { position: relative; display: flex; align-items: center; height: 26px; border: 1px solid #82949c; background: #fff; }
.combo select, .combo input { appearance: none; width: 100%; height: 100%; border: 0; background: transparent; padding: 0 16px 0 4px; outline: 0; opacity: 1; }
.combo > svg:last-child { position: absolute; right: 5px; width: 12px; height: 12px; fill: none; stroke: #6e8084; stroke-width: 2px; pointer-events: none; }
.combo.grey { background: #e3eaeb; border-color: #b0bec0; }
.combo.off { background: #d2dcdd; border-color: #c4d0d2; }
.combo.off > svg:last-child, .target > svg:last-child { stroke: #c0cacc; }
.zoom { width: 70px; height: 20px; margin-left: 4px; }
.wsize { display: flex; align-items: center; gap: 2px; padding: 0 1px 0 6px; height: 20px; border-right: 1px solid #d4dcde; }
.wsize svg { width: 13px; height: 13px; fill: none; stroke: #5c6c70; stroke-width: 2px; }
.weight { padding: 2px 5px; border-right: 1px solid #d4dcde; }

.split { height: 9px; display: flex; justify-content: center; flex: none; }
.split button { width: 60px; background: #b8d8e8; display: flex; justify-content: center; align-items: center; }
.split .tri { border-width: 5px; border-top: 6px solid #fff; border-bottom: 0; }
.collapse { position: absolute; right: 0; top: 456px; width: 6px; height: 58px; background: #bcd8e8; }
.collapse svg { width: 6px; height: 10px; }

.props { margin: 0 8px; height: 158px; background: #f4f7f9; flex: none; display: flex; flex-direction: column; }
.props .bar { height: 23px; flex: none; padding-left: 5px; }
.pbody { height: 69px; display: flex; justify-content: space-between; border-bottom: 1px solid #a4b6b8; flex: none; }
.pgrid { display: grid; grid-template-columns: 52px 126px 39px 139px 241px 40px auto; row-gap: 2px; padding-top: 10px; align-content: start; align-items: center; justify-items: start; }
.pgrid label { justify-self: end; }
.pgrid > .combo, .pair { margin-left: 4px; }
.pair { display: flex; gap: 3px; align-items: center; }
.c1 { width: 122px; }
.c2 { width: 134px; }
.half { width: 66px; }
.linkbox { width: 360px; margin-left: 1px; }
.pgrid > .target { width: 88px; margin-left: 5px; border-color: #d4dcde; }
.target select { background: #f5f6f7; height: 18px; width: 60px; margin-left: 3px; padding: 0; }
.extra { display: flex; align-items: center; gap: 5px; width: 226px; margin-left: 6px; height: 26px; }
.push { height: 22px; padding: 0 9px; background: #e3eaeb; border: 1px solid #bccaca; line-height: 18px; }
.push.css { width: 52px; }
.push.dis { width: 106px; background: #d2dcdd; color: #97a3a6; border-color: #c8d4d4; }
.swatch { width: 26px; height: 25px; border: 2px outset #dfe6e8; background: #f4f7f9; display: flex; align-items: flex-end; justify-content: flex-end; border-right-color: #76868a; border-bottom-color: #76868a; border-top-color: #76868a; }
.hex { width: 82px; height: 24px; border: 1px solid #b8c8d8; background: #fff; }
.fmt { display: flex; gap: 1px; margin-left: auto; }
.fmt button { width: 25px; height: 23px; display: grid; place-items: center; }
.fmt svg { width: 18px; height: 18px; }
.fmt .serif { font: 18px/20px "Liberation Serif", serif; color: #05080c; }
.mini { width: 19px; height: 18px; }
.side { padding: 4px 4px 0 0; display: flex; flex-direction: column; gap: 1px; }
.side svg { width: 18px; height: 18px; }
.pfoot { flex: 1; display: flex; gap: 10px; align-items: flex-start; padding: 1px 6px 0 473px; }
.expander { margin-left: auto; align-self: flex-end; padding-bottom: 2px; }
.expander svg { width: 12px; height: 10px; }

.right { width: 291px; flex: none; background: #f4f7f9; display: flex; flex-direction: column; border-left: 1px solid #d4e4ec; }
.panel { width: 100%; padding-left: 4px; flex: none; font-size: 14px; line-height: 20px; border-top-width: 1px; }
.panel .tri { margin-left: 7px; margin-right: 5px; }
.panel .side-tri { margin-left: 9px; margin-right: 7px; }
.ftabs { height: 24px; display: flex; align-items: flex-end; background: #96c0df; color: #f0faff; flex: none; }
.ftabs .tab { width: 50px; color: #14183c; padding-right: 6px; }
.ftab { padding: 0 10px 2px; }
.ftab + .ftab { border-left: 1px solid #c8e0f0; }
.fbar { height: 38px; display: flex; align-items: center; padding: 2px 0 0 6px; gap: 10px; flex: none; }
.fbar a { color: #1c2cf0; margin-top: 4px; }
.site { width: 165px; height: 27px; padding-left: 3px; }
.pic, .node svg { width: 21px; height: 19px; }
.files { flex: 1; display: flex; flex-direction: column; justify-content: space-between; background: #fff; border-left: 2px solid #76888e; margin-left: 1px; border-bottom: 4px solid #f4f7f9; }
table { width: 100%; border-collapse: collapse; table-layout: fixed; border-top: 2px solid #64787c; }
th { height: 20px; padding: 0 2px 0 3px; line-height: 18px; text-align: left; border-bottom: 2px solid #14201c; border-right: 1px solid #14201c; background: #f4f7f9; color: #0c1418; overflow: hidden; }
.sz { width: 50px; text-align: right; }
.ty { width: 33px; border-right: 0; }
td { height: 22px; padding: 0; }
tr:nth-child(even) td { height: 23px; }
.root { background: #f2f4f5; }
.node { display: flex; align-items: center; padding-left: 6px; height: 22px; }
.node > span { margin-left: 12px; }
.root .box { margin-right: 6px; }
.child { margin-left: 25px; padding-left: 0; position: relative; }
.child::before { content: ""; position: absolute; left: 5px; top: 0; height: 100%; border-left: 1px dotted #96a0a4; }
.box { width: 11px; height: 11px; border: 1px solid #6c7c80; background: #fff; line-height: 9px; font-size: 12px; font-weight: 700; text-align: center; color: #000; flex: none; position: relative; display: grid; place-items: center; }
.nobox { width: 11px; }
.dots { width: 11px; border-top: 1px dotted #96a0a4; }
.hscroll { display: flex; background: #f4f6f7; height: 19px; align-items: center; }
.htrack { flex: 1; height: 100%; }
.hthumb { width: 24%; height: 100%; background: #cfdcdf; }
.flog { height: 28px; display: flex; align-items: center; justify-content: space-between; padding: 0 7px 0 2px; border-top: 1px solid #d8e2e2; flex: none; }
.flog > svg { width: 22px; height: 22px; margin-bottom: 6px; }
.flog .push { height: 19px; width: 51px; line-height: 16px; margin-top: 3px; padding: 0; }

.taskbar { height: 50px; background: #060909; color: #fff; display: flex; flex: none; }
.start { width: 60px; display: grid; place-items: center; }
.start svg { width: 20px; height: 22px; }
.start .wide { width: 24px; height: 22px; }
.apps { flex: 1; min-width: 0; display: flex; padding-left: 4px; }
.apps button { flex: 1 1 0; min-width: 0; display: grid; place-items: center; position: relative; }
.apps svg { width: 29px; height: 31px; }
.apps .open::after, .apps .active::after { content: ""; position: absolute; bottom: 0; left: 5px; right: 5px; height: 3px; background: #a8d8f8; }
.apps .active { background: #2c3334; }
.apps .active::after { left: 0; right: 0; }
.tray { width: 298px; flex: none; display: flex; align-items: center; }
.tray button { width: 30px; height: 50px; display: grid; place-items: center; flex: none; }
.tray svg { width: 20px; height: 20px; }
.tray .people { width: 58px; }
.clock { flex: 1; text-align: center; display: flex; flex-direction: column; font: 14px/23px "Open Sans", "Noto Sans", sans-serif; }
.tray .note { width: 66px; padding-right: 8px; border-right: 6px solid #060909; box-shadow: inset -1px 0 #5c6466; }
.note svg { width: 22px; height: 22px; }
</style>
